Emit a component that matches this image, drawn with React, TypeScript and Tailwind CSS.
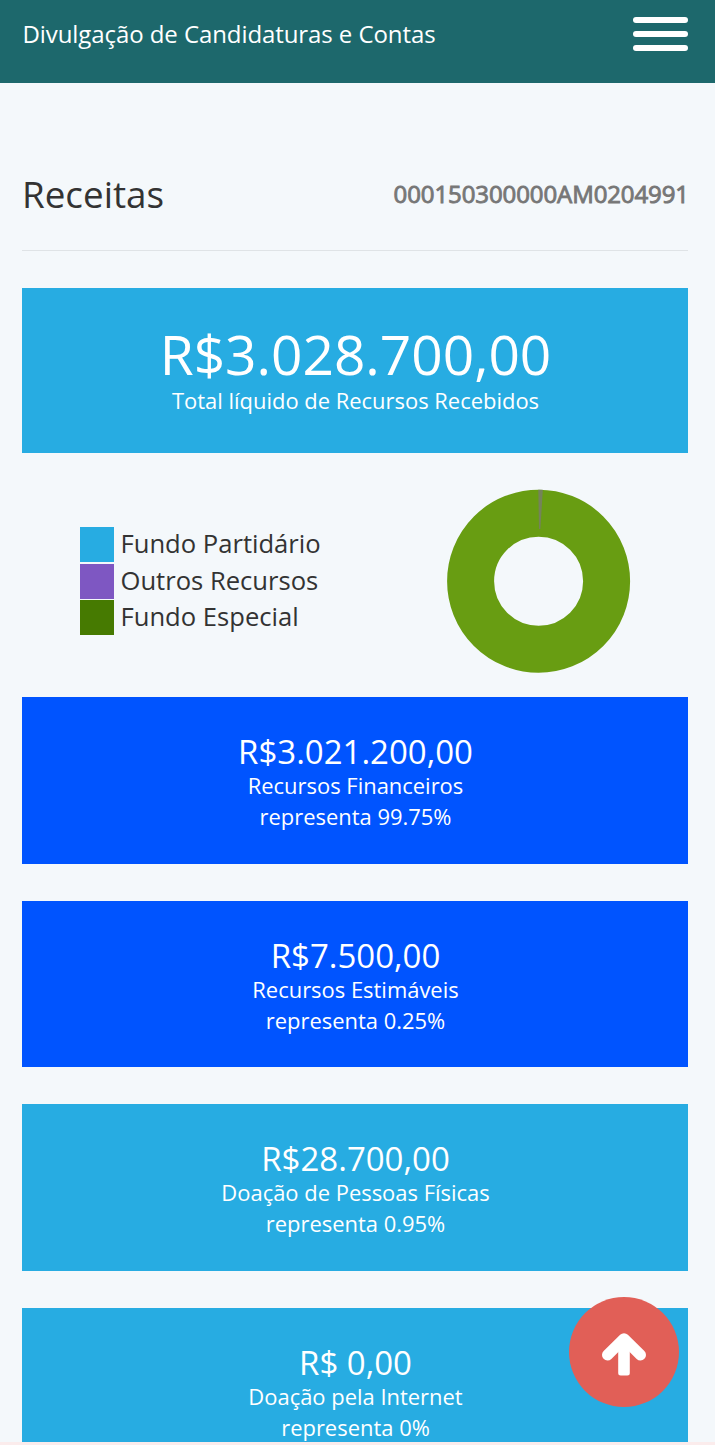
import React from 'react';

const legend = [
  { label: 'Fundo Partidário', color: 'bg-[#27ace2]' },
  { label: 'Outros Recursos', color: 'bg-[#7e57c2]' },
  { label: 'Fundo Especial', color: 'bg-[#467a01]' },
];

const cards = [
  { value: 'R$3.021.200,00', label: 'Recursos Financeiros', percent: '99.75', color: 'bg-[#0054ff]' },
  { value: 'R$7.500,00', label: 'Recursos Estimáveis', percent: '0.25', color: 'bg-[#0054ff]' },
  { value: 'R$28.700,00', label: 'Doação de Pessoas Físicas', percent: '0.95', color: 'bg-[#27ace2]' },
  { value: 'R$ 0,00', label: 'Doação pela Internet', percent: '0', color: 'bg-[#27ace2]' },
];

const Header = () => (
  <header className="flex h-[83px] items-start justify-between bg-[#1d686c] pl-[22.5px] pr-[27px] text-white">
    <h1 className="pt-[16px] text-[24px] leading-[36px] tracking-[-0.08px]">
      Divulgação de Candidaturas e Contas
    </h1>
    <button className="mt-[17px] flex w-[55px] flex-col gap-[8px]" aria-label="Menu">
      <span className="h-[6px] w-full rounded-[3px] bg-white" />
      <span className="h-[5.5px] w-full rounded-[3px] bg-white" />
      <span className="h-[6px] w-full rounded-[3px] bg-white" />
    </button>
  </header>
);

const DonutChart = () => (
  <svg width="184" height="184" viewBox="0 0 184 184">
    <circle cx="91.6" cy="92.2" r="68" fill="none" stroke="#689d12" strokeWidth="47" />
    <path d="M92 40 L91.3 0.7 L95.8 0.8 L93.4 40 Z" fill="#75835a" />
  </svg>
);

const ArrowUp = () => (
  <svg width="50" height="50" viewBox="0 0 50 50" fill="none" stroke="currentColor">
    <path
      d="M8.5 28 L25 11.7 L41.5 28"
      strokeWidth="11"
      strokeLinecap="round"
      strokeLinejoin="round"
    />
    <rect x="19.2" y="12" width="11.6" height="36.5" rx="2.5" fill="currentColor" stroke="none" />
  </svg>
);

const App = () => {
  return (
    <div className="relative h-[1445px] w-[715px] overflow-hidden bg-[#f4f8fb] font-['Open_Sans',sans-serif] text-[#333]">
      <Header />
      <main className="pl-[22px] pr-[27px]">
        <div className="mt-[67px] flex h-[101px] items-start justify-between border-b border-[#dfe3e6] pt-[17px]">
          <h2 className="text-[36.8px] leading-[54px]">Receitas</h2>
          <span className="-mr-px pt-[9px] text-[24px] leading-[36px] tracking-[-0.1px] text-[#777] [-webkit-text-stroke:0.9px_#777]">
            000150300000AM0204991
          </span>
        </div>

        <section className="mt-[37px] h-[165px] bg-[#27ace2] pl-px pt-[35px] text-center text-white">
          <p className="text-[55px] leading-[62px]">R$3.028.700,00</p>
          <p className="text-[21.95px] leading-[31px]">Total líquido de Recursos Recebidos</p>
        </section>

        <section className="flex h-[244px] items-start pl-[58px] pt-[36px]">
          <ul className="w-[367px] pt-[38px]">
            {legend.map((item) => (
              <li key={item.label} className="flex h-[36.6px] items-start gap-[6.5px]">
                <span className={`h-[35px] w-[34px] ${item.color}`} />
                <span className="text-[25.6px] leading-[34.6px]">{item.label}</span>
              </li>
            ))}
          </ul>
          <DonutChart />
        </section>

        <div className="flex flex-col gap-[37px]">
          {cards.map((card) => (
            <section
              key={card.label}
              className={`h-[166.6px] shrink-0 pl-px pt-[37.3px] text-center text-white ${card.color}`}
            >
              <p className="text-[33px] leading-[36px]">{card.value}</p>
              <p className="text-[21.95px] leading-[31px]">{card.label}</p>
              <p className="text-[21.95px] leading-[31.5px]">representa {card.percent}%</p>
            </section>
          ))}
        </div>
      </main>

      <button
        className="absolute left-[569px] top-[1297px] flex h-[110px] w-[110px] items-center justify-center rounded-full bg-[#e15f57] text-white"
        aria-label="Voltar ao topo"
      >
        <ArrowUp />
      </button>
      <div className="absolute bottom-0 left-0 h-[3px] w-full bg-[#fbecec]" />
    </div>
  );
};

export default App;
